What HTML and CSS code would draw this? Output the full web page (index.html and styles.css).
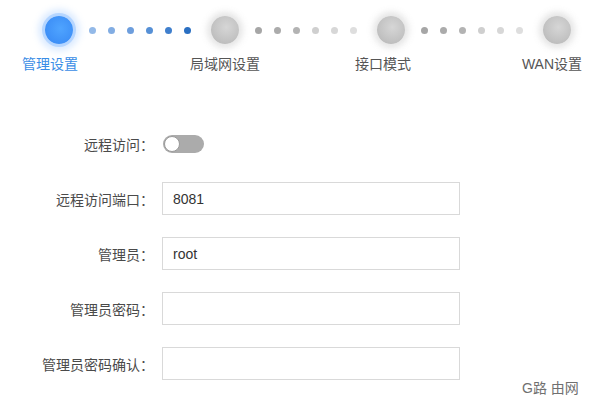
FILE: index.html
```html
<!DOCTYPE html>
<html lang="zh-CN">
<head>
<meta charset="utf-8">
<title>管理设置</title>
<link rel="stylesheet" href="styles.css">
</head>
<body>
<div class="page">
  <div class="stepper">
    <div class="step step-first active">
      <div class="circle"></div>
      <div class="step-label">管理设置</div>
    </div>
    <div class="connector">
      <span class="dot b1"></span><span class="dot b2"></span><span class="dot b3"></span><span class="dot b4"></span><span class="dot b5"></span><span class="dot b6"></span>
    </div>
    <div class="step">
      <div class="circle"></div>
      <div class="step-label">局域网设置</div>
    </div>
    <div class="connector">
      <span class="dot g1"></span><span class="dot g2"></span><span class="dot g3"></span><span class="dot g4"></span><span class="dot g5"></span><span class="dot g6"></span>
    </div>
    <div class="step step-third">
      <div class="circle"></div>
      <div class="step-label">接口模式</div>
    </div>
    <div class="connector">
      <span class="dot g1"></span><span class="dot g2"></span><span class="dot g3"></span><span class="dot g4"></span><span class="dot g5"></span><span class="dot g6"></span>
    </div>
    <div class="step step-last">
      <div class="circle"></div>
      <div class="step-label">WAN设置</div>
    </div>
  </div>

  <form class="form">
    <div class="row">
      <label class="label">远程访问：</label>
      <div class="toggle"><span class="knob"></span></div>
    </div>
    <div class="row">
      <label class="label">远程访问端口：</label>
      <div class="input">8081</div>
    </div>
    <div class="row">
      <label class="label">管理员：</label>
      <div class="input">root</div>
    </div>
    <div class="row">
      <label class="label">管理员密码：</label>
      <div class="input"></div>
    </div>
    <div class="row">
      <label class="label">管理员密码确认：</label>
      <div class="input"></div>
    </div>
  </form>

  <div class="watermark">G路 由网</div>
</div>
</body>
</html>
```

FILE: styles.css
```css
html, body {
  margin: 0;
  padding: 0;
  background: #ffffff;
}

body {
  font-family: "Liberation Sans", "Noto Sans CJK SC", sans-serif;
  color: #444;
  width: 600px;
  height: 408px;
  overflow: hidden;
}

.page {
  position: relative;
  width: 600px;
  height: 408px;
}

/* ---------- stepper ---------- */
.stepper {
  display: flex;
  align-items: flex-start;
  padding: 16px 0 0 45px;
}

.step {
  display: flex;
  flex-direction: column;
  align-items: center;
  width: 28px;
  flex: none;
}

.circle {
  width: 28px;
  height: 28px;
  border-radius: 50%;
  background: radial-gradient(circle at 55% 40%, #d6d6d6 0%, #c4c4c4 55%, #b3b3b3 100%);
  box-shadow: 0 0 6px 4px rgba(170, 170, 170, 0.3);
}

.active .circle {
  background: radial-gradient(circle at 55% 45%, #4fa4ff 0%, #3d8ff7 70%, #3a86f0 100%);
  box-shadow: 0 0 0 3px rgba(120, 180, 255, 0.4), 0 0 6px 7px rgba(140, 190, 255, 0.3);
}

.step-label {
  margin-top: 10px;
  font-size: 14px;
  line-height: 20px;
  white-space: nowrap;
  color: #555;
}

.active .step-label {
  color: #3a8de6;
}

.step-first .step-label { margin-right: 18px; }
.step-third .step-label { margin-right: 16px; }
.step-last .step-label { margin-right: 10px; }

.connector {
  display: flex;
  align-items: center;
  gap: 12px;
  width: 138px;
  height: 28px;
  padding-left: 16px;
  box-sizing: border-box;
  flex: none;
}

.dot {
  width: 7px;
  height: 7px;
  border-radius: 50%;
  flex: none;
}

.b1 { background: #93b9e8; }
.b2 { background: #82ade3; }
.b3 { background: #6d9edd; }
.b4 { background: #5690d6; }
.b5 { background: #3f7fcd; }
.b6 { background: #2a6fc2; }

.g1 { background: #a6a6a6; }
.g2 { background: #ababab; }
.g3 { background: #b3b3b3; }
.g4 { background: #cfcfcf; }
.g5 { background: #d7d7d7; }
.g6 { background: #dedede; }

/* ---------- form ---------- */
.form {
  display: flex;
  flex-direction: column;
  gap: 22px;
  margin: 0;
  padding-top: 53px;
}

.row {
  display: flex;
  align-items: center;
  height: 33px;
}

.label {
  width: 154px;
  text-align: right;
  font-size: 14px;
  color: #4a4a4a;
  white-space: nowrap;
  flex: none;
}

.input {
  margin-left: 8px;
  width: 298px;
  height: 33px;
  box-sizing: border-box;
  border: 1px solid #d9d9d9;
  padding: 0 10px;
  display: flex;
  align-items: center;
  font-size: 14px;
  color: #333;
}

.toggle {
  margin-left: 9px;
  width: 41px;
  height: 18px;
  border-radius: 9px;
  background: #ababab;
  display: flex;
  align-items: center;
  padding-left: 1px;
  box-sizing: border-box;
}

.knob {
  width: 16px;
  height: 16px;
  border-radius: 50%;
  background: #fff;
  box-sizing: border-box;
  border: 1px solid #9a9a9a;
}

/* ---------- watermark ---------- */
.watermark {
  position: absolute;
  left: 522px;
  top: 377px;
  font-size: 14px;
  color: #707070;
  white-space: nowrap;
}
```
